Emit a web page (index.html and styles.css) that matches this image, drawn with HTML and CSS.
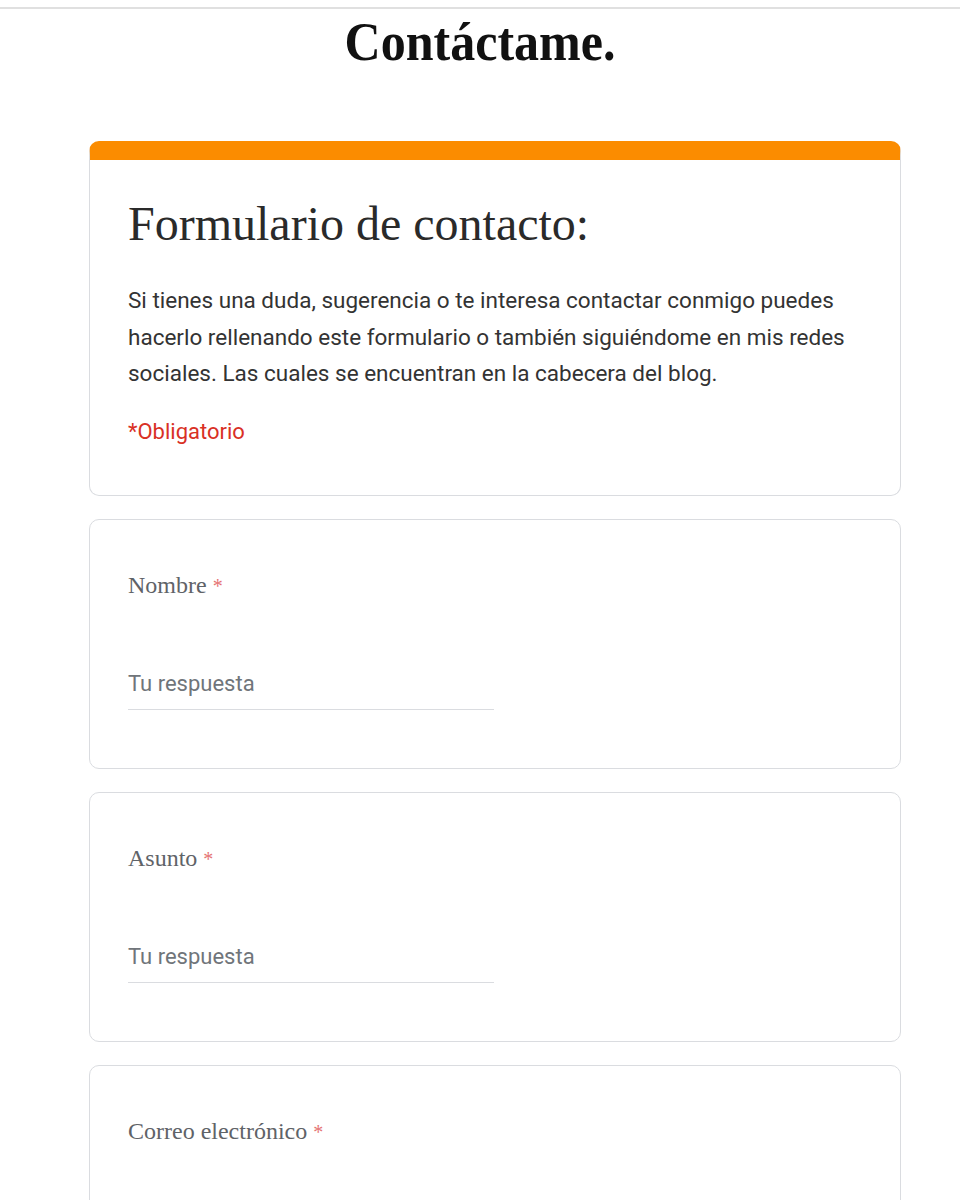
FILE: index.html
```html
<!DOCTYPE html>
<html lang="es">
<head>
<meta charset="utf-8">
<link rel="stylesheet" href="styles.css">
</head>
<body>
<div class="topline"></div>
<h1 class="title">Contáctame.</h1>
<main class="form">
  <section class="card card-head">
    <h2 class="form-title">Formulario de contacto:</h2>
    <p class="desc">Si tienes una duda, sugerencia o te interesa contactar conmigo puedes hacerlo rellenando este formulario o también siguiéndome en mis redes sociales. Las cuales se encuentran en la cabecera del blog.</p>
    <p class="req">*Obligatorio</p>
  </section>
  <section class="card">
    <div class="label">Nombre <span class="star">*</span></div>
    <div class="input">Tu respuesta</div>
  </section>
  <section class="card">
    <div class="label">Asunto <span class="star">*</span></div>
    <div class="input">Tu respuesta</div>
  </section>
  <section class="card">
    <div class="label">Correo electrónico <span class="star">*</span></div>
    <div class="input">Tu respuesta</div>
  </section>
</main>
</body>
</html>
```

FILE: styles.css
```css
html, body {
  margin: 0;
  padding: 0;
  background: #fff;
}
body {
  font-family: Roboto, "Liberation Sans", sans-serif;
  overflow: hidden;
  height: 1200px;
}
.topline {
  margin-top: 7px;
  height: 2px;
  background: #e0e0e0;
}
.title {
  margin: 3px 0 0 0;
  text-align: center;
  font-family: "Liberation Serif", serif;
  font-weight: 700;
  font-size: 55px;
  line-height: 60px;
  color: #111;
  transform: scaleX(0.91);
}
.form {
  margin: 69px 0 0 89px;
  width: 812px;
  display: flex;
  flex-direction: column;
  gap: 23px;
}
.card {
  border: 1px solid #dadce0;
  border-radius: 10px;
  padding: 48px 38px 0 38px;
  height: 250px;
  box-sizing: border-box;
  background: #fff;
}
.card-head {
  border-top: 19px solid #fb8c00;
  height: 355px;
  padding: 34px 38px 0 38px;
}
.form-title {
  margin: 0;
  font-family: "Liberation Serif", serif;
  font-weight: 400;
  font-size: 48px;
  line-height: 60px;
  color: #2a2a2a;
}
.desc {
  margin: 28px 0 0 0;
  font-size: 22.5px;
  line-height: 36.5px;
  color: #333;
}
.req {
  margin: 25px 0 0 0;
  font-size: 22px;
  line-height: 30px;
  color: #d93025;
}
.label {
  font-family: "Liberation Serif", serif;
  font-size: 24px;
  line-height: 34px;
  color: #5f6368;
}
.star {
  color: #e57373;
  font-size: 20px;
}
.input {
  margin-top: 68px;
  width: 366px;
  font-size: 22px;
  line-height: 26px;
  padding-bottom: 12px;
  color: #70757a;
  border-bottom: 1px solid #dadce0;
}
```
